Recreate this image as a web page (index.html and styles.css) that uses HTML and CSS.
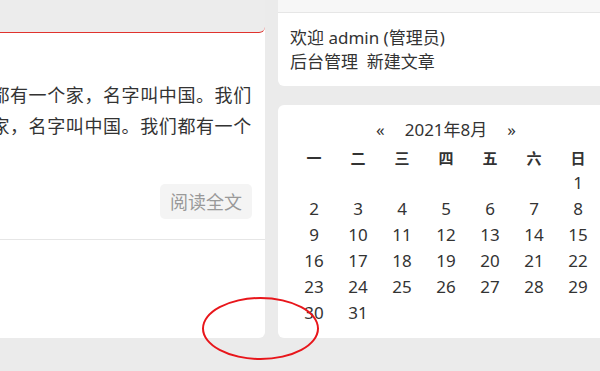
FILE: index.html
```html
<!DOCTYPE html>
<html lang="zh-CN">
<head>
  <meta charset="UTF-8" />
  <meta name="viewport" content="width=device-width, initial-scale=1" />
  <title>博客首页</title>
  <link rel="stylesheet" href="styles.css">
</head>
<body>
  <div class="page">
    <!-- 文章列表 -->
    <div class="main">
      <div class="post">
        <div class="post-head"></div>
        <div class="post-body">
          <p class="summary">国。我们都有一个家，名字叫中国。我们都有一个家，名字叫中国。我们都有一个</p>
          <div class="more"><a class="read-more" href="#">阅读全文</a></div>
        </div>
        <div class="post-foot"></div>
      </div>
    </div>

    <!-- 侧边栏 -->
    <div class="side">
      <div class="widget">
        <div class="widget-head"></div>
        <div class="widget-body user">
          <div>欢迎 admin (管理员)</div>
          <div><a href="#">后台管理</a>&nbsp;&nbsp;<a href="#">新建文章</a></div>
        </div>
      </div>

      <div class="widget calendar">
        <div class="cal-title">
          <a href="#">«</a>
          <span>2021年8月</span>
          <a href="#">»</a>
        </div>
        <table>
          <thead>
            <tr><th>一</th><th>二</th><th>三</th><th>四</th><th>五</th><th>六</th><th>日</th></tr>
          </thead>
          <tbody>
            <tr><td></td><td></td><td></td><td></td><td></td><td></td><td>1</td></tr>
            <tr><td>2</td><td>3</td><td>4</td><td>5</td><td>6</td><td>7</td><td>8</td></tr>
            <tr><td>9</td><td>10</td><td>11</td><td>12</td><td>13</td><td>14</td><td>15</td></tr>
            <tr><td>16</td><td>17</td><td>18</td><td>19</td><td>20</td><td>21</td><td>22</td></tr>
            <tr><td>23</td><td>24</td><td>25</td><td>26</td><td>27</td><td>28</td><td>29</td></tr>
            <tr><td>30</td><td>31</td><td></td><td></td><td></td><td></td><td></td></tr>
          </tbody>
        </table>
      </div>
    </div>
  </div>

  <!-- 标注圈 -->
  <div class="mark"></div>
</body>
</html>
```

FILE: styles.css
```css
* {
  box-sizing: border-box;
}
body {
  margin: 0;
  background: #ebebeb;
  font-family: "Noto Sans", "Noto Sans CJK SC", sans-serif;
  color: #333;
  overflow: hidden;
  height: 371px;
}
a {
  color: #333;
  text-decoration: none;
}
.page {
  display: flex;
  gap: 13px;
  margin-left: -98px;
  width: 740px;
}
.main {
  width: 363px;
  flex: none;
}
.side {
  width: 340px;
  flex: none;
}
.post {
  background: #fff;
  border-radius: 0 0 6px 6px;
}
.post-head {
  height: 33px;
  background: #ececec;
  border-bottom: 1px solid #e0332e;
  border-bottom-right-radius: 6px;
}
.post-body {
  padding: 46px 13px 20px 15px;
}
.summary {
  margin: 0;
  font-family: "Noto Sans CJK SC", sans-serif;
  font-size: 18px;
  line-height: 31px;
  letter-spacing: 0.6px;
}
.more {
  display: flex;
  justify-content: flex-end;
  margin-top: 43px;
}
.read-more {
  font-family: "Noto Sans CJK SC", sans-serif;
  font-size: 18px;
  line-height: 35px;
  padding: 0 10px;
  color: #999;
  background: #f4f4f4;
  border-radius: 5px;
}
.post-foot {
  height: 99px;
  border-top: 1px solid #e6e6e6;
}
.widget {
  background: #fff;
  border-radius: 0 0 6px 6px;
}
.widget-head {
  height: 13px;
  background: #f7f7f7;
  border-bottom: 1px solid #e6e6e6;
}
.user {
  padding: 13px 12px 12px;
  font-size: 17px;
  line-height: 24px;
}
.calendar {
  margin-top: 19px;
  border-radius: 6px;
  padding: 12px 14px 11px;
  height: 233px;
}
.cal-title {
  width: 308px;
  display: flex;
  justify-content: center;
  gap: 20px;
  font-size: 17px;
  line-height: 26px;
  margin-bottom: 2px;
}
.calendar table {
  border-collapse: collapse;
  width: 308px;
  table-layout: fixed;
}
.calendar th,
.calendar td {
  width: 44px;
  height: 26px;
  padding: 0;
  text-align: center;
}
.calendar th {
  height: 24px;
  font-family: "Noto Sans CJK SC", sans-serif;
  font-size: 15px;
  font-weight: bold;
}
.calendar td {
  font-size: 17px;
}
.mark {
  position: absolute;
  left: 202px;
  top: 297px;
  width: 117px;
  height: 63px;
  border: 2px solid #e8161b;
  border-radius: 50%;
}
```
